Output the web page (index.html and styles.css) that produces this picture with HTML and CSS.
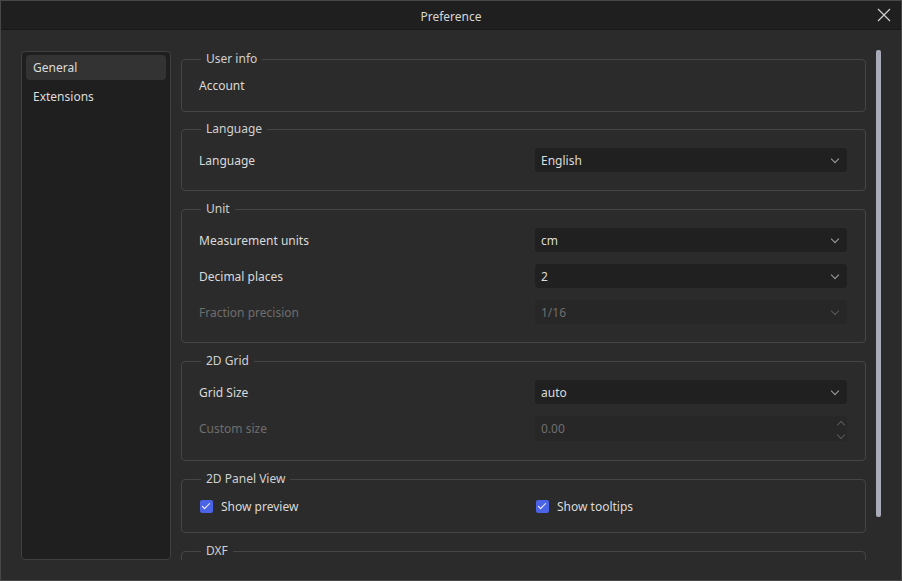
FILE: index.html
```html
<!DOCTYPE html>
<html lang="en">
  <head>
    <meta charset="UTF-8" />
    <title>Preference</title>
    <link rel="stylesheet" href="styles.css">
  </head>
  <body>
    <div class="window">
      <div class="titlebar">
        <span class="title">Preference</span>
        <svg class="close" width="14" height="14" viewBox="0 0 14 14">
          <path d="M1 1L13 13M13 1L1 13" stroke="#d0d0d0" stroke-width="1.2" fill="none" />
        </svg>
      </div>
      <div class="body">
        <div class="sidebar">
          <div class="nav-item active">General</div>
          <div class="nav-item">Extensions</div>
        </div>
        <div class="content">
          <fieldset class="group user-group">
            <legend>User info</legend>
            <div class="row text-row"><span class="label">Account</span></div>
          </fieldset>

          <fieldset class="group">
            <legend>Language</legend>
            <div class="row">
              <span class="label">Language</span>
              <div class="combo"><span>English</span><i class="chev"></i></div>
            </div>
          </fieldset>

          <fieldset class="group">
            <legend>Unit</legend>
            <div class="row">
              <span class="label">Measurement units</span>
              <div class="combo"><span>cm</span><i class="chev"></i></div>
            </div>
            <div class="row">
              <span class="label">Decimal places</span>
              <div class="combo"><span>2</span><i class="chev"></i></div>
            </div>
            <div class="row disabled">
              <span class="label">Fraction precision</span>
              <div class="combo"><span>1/16</span><i class="chev"></i></div>
            </div>
          </fieldset>

          <fieldset class="group grid-group">
            <legend>2D Grid</legend>
            <div class="row">
              <span class="label">Grid Size</span>
              <div class="combo"><span>auto</span><i class="chev"></i></div>
            </div>
            <div class="row disabled">
              <span class="label">Custom size</span>
              <div class="combo spin">
                <span>0.00</span>
                <div class="arrows"><i class="up"></i><i class="chev"></i></div>
              </div>
            </div>
          </fieldset>

          <fieldset class="group">
            <legend>2D Panel View</legend>
            <div class="row check-row">
              <label class="check"><span class="box"></span>Show preview</label>
              <label class="check"><span class="box"></span>Show tooltips</label>
            </div>
          </fieldset>

          <fieldset class="group">
            <legend>DXF</legend>
            <div class="row"></div>
          </fieldset>
        </div>
        <div class="scrollbar"><div class="thumb"></div></div>
      </div>
    </div>
  </body>
</html>
```

FILE: styles.css
```css
html, body {
  margin: 0;
  background-color: #2b2b2b;
}
.window {
  width: 902px;
  height: 581px;
  box-sizing: border-box;
  border: 1px solid #474747;
  background-color: #2b2b2b;
  font-family: 'Noto Sans', 'Open Sans', sans-serif;
  font-size: 12px;
  color: #dcdcdc;
  display: flex;
  flex-direction: column;
}
.titlebar {
  height: 28px;
  background-color: #1f1f1f;
  border-bottom: 1px solid #181818;
  display: flex;
  align-items: center;
  justify-content: center;
  position: relative;
}
.title {
  color: #d6d6d6;
  padding-top: 2px;
}
.close {
  position: absolute;
  right: 10px;
  top: 7px;
}
.body {
  flex: 1;
  display: flex;
  padding: 21px 20px 20px 20px;
  min-height: 0;
}
.sidebar {
  width: 150px;
  box-sizing: border-box;
  background-color: #1f1f1f;
  border: 1px solid #3f3f3f;
  border-radius: 4px;
  padding: 3px 4px;
  display: flex;
  flex-direction: column;
  gap: 4px;
}
.nav-item {
  height: 25px;
  line-height: 25px;
  padding-left: 7px;
  border-radius: 4px;
  color: #dcdcdc;
}
.nav-item.active {
  background-color: #333333;
}
.content {
  flex: 1;
  margin-left: 10px;
  overflow: hidden;
}
.group {
  margin: 0 0 10px 0;
  padding: 11px 18px 18px 17px;
  border: 1px solid #454545;
  border-radius: 4px;
  display: flex;
  flex-direction: column;
  gap: 12px;
  min-width: 0;
}
.group legend {
  margin-left: 2px;
  padding: 0 5px;
  line-height: 16px;
  color: #d0d0d0;
}
.user-group {
  padding-top: 10px;
  padding-bottom: 18px;
  margin-bottom: 9px;
}
.grid-group {
  padding-bottom: 20px;
}
.row {
  display: grid;
  grid-template-columns: 1fr 312px;
  align-items: center;
  height: 24px;
}
.text-row,
.check-row {
  height: 16px;
}
.label {
  color: #dadada;
}
.combo {
  height: 24px;
  background-color: #202020;
  border-radius: 4px;
  display: flex;
  align-items: center;
  justify-content: space-between;
  padding: 0 7px 0 6px;
  color: #dcdcdc;
}
.chev {
  width: 5px;
  height: 5px;
  border-right: 1px solid #a0a0a0;
  border-bottom: 1px solid #a0a0a0;
  transform: rotate(45deg);
  margin-top: -3px;
  margin-right: 2px;
}
.disabled .label,
.disabled .combo {
  color: #6e6e6e;
}
.disabled .combo {
  background-color: #272727;
}
.disabled .chev {
  border-color: #5a5a5a;
}
.spin {
  height: 25px;
  padding-right: 3px;
}
.arrows {
  display: flex;
  flex-direction: column;
  gap: 7px;
  align-items: center;
}
.arrows .up {
  width: 5px;
  height: 5px;
  border-left: 1px solid #5a5a5a;
  border-top: 1px solid #5a5a5a;
  transform: rotate(45deg);
  margin-top: 3px;
}
.arrows .chev {
  margin-right: 0;
}
.check {
  display: flex;
  align-items: center;
  gap: 8px;
  padding-left: 1px;
  color: #dadada;
}
.box {
  width: 13px;
  height: 13px;
  border-radius: 2px;
  background-color: #4b63e6;
  position: relative;
}
.box::after {
  content: '';
  position: absolute;
  left: 4px;
  top: 1px;
  width: 3px;
  height: 7px;
  border-right: 1.5px solid #fff;
  border-bottom: 1.5px solid #fff;
  transform: rotate(45deg);
}
.scrollbar {
  width: 5px;
  margin-left: 10px;
  margin-top: -1px;
}
.thumb {
  height: 467px;
  background-color: #a9abb9;
  border-radius: 2px;
}
```
